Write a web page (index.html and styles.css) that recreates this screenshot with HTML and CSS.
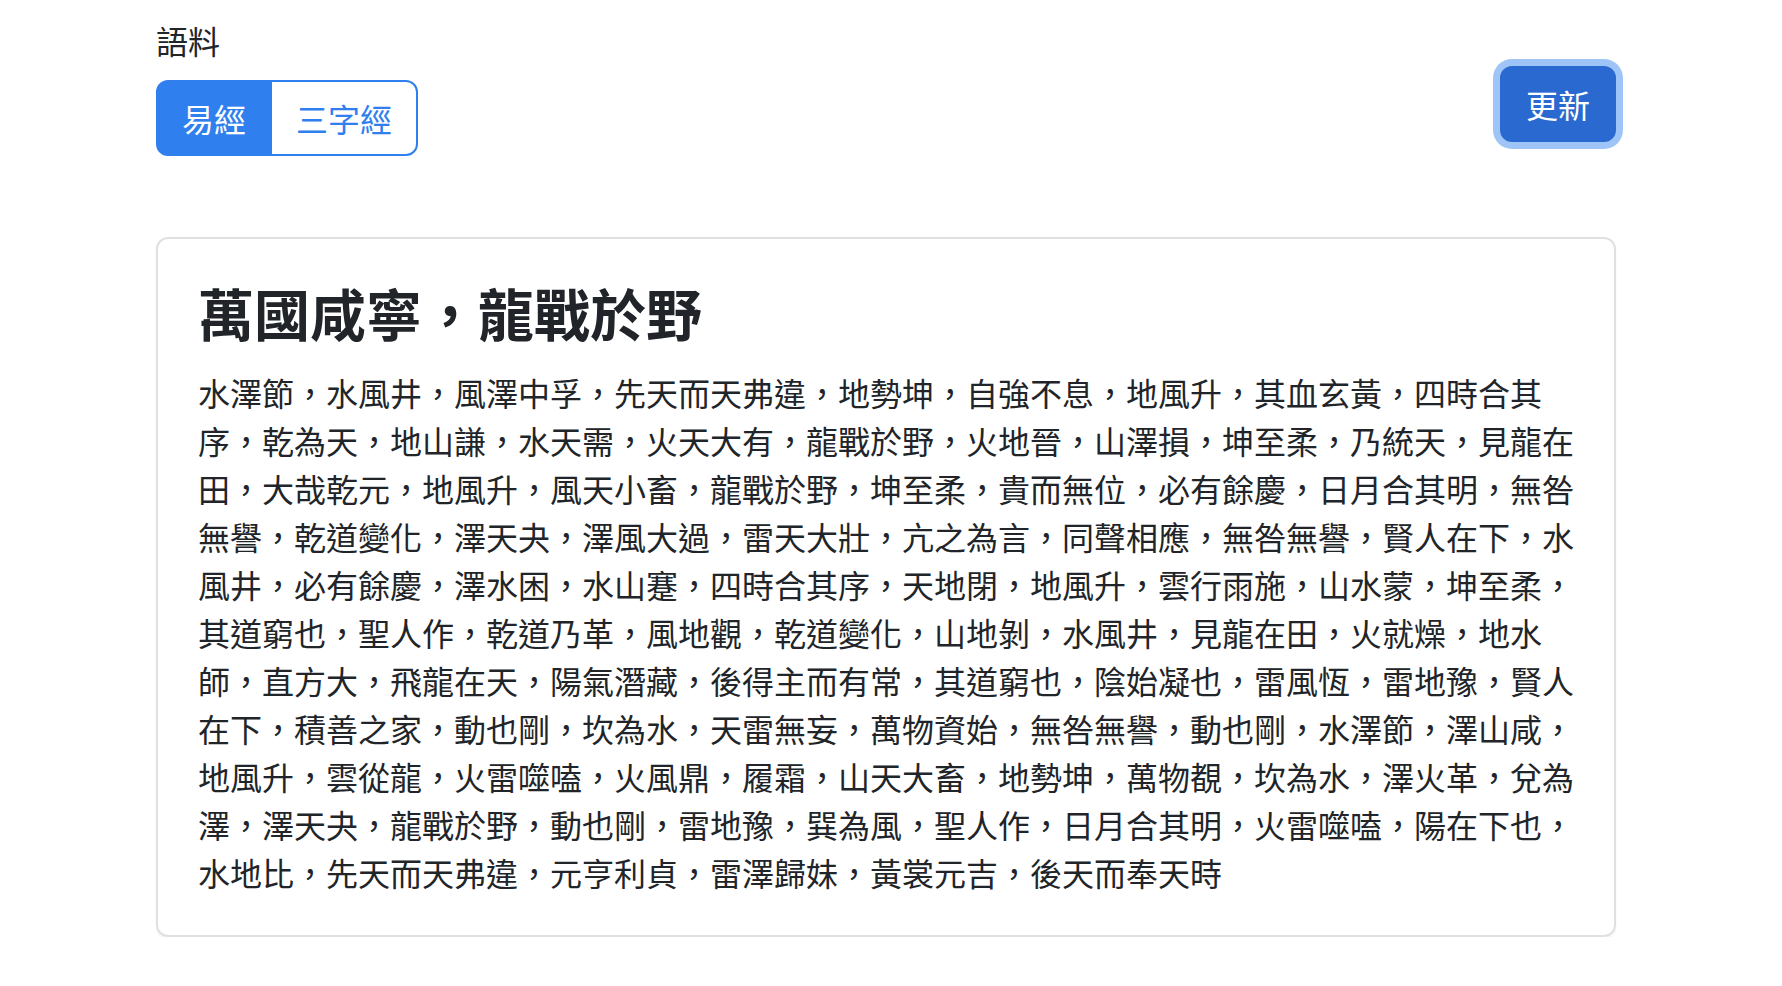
FILE: index.html
```html
<!DOCTYPE html>
<html lang="zh-Hant">
<head>
<meta charset="utf-8">
<title>語料</title>
<link rel="stylesheet" href="styles.css">
</head>
<body>
<div class="page">
  <div class="toolbar">
    <div class="field">
      <label class="field-label">語料</label>
      <div class="btn-group">
        <button class="toggle active">易經</button>
        <button class="toggle">三字經</button>
      </div>
    </div>
    <button class="btn-refresh">更新</button>
  </div>
  <div class="card">
    <h3 class="card-title">萬國咸寧，龍戰於野</h3>
    <p class="card-text">水澤節，水風井，風澤中孚，先天而天弗違，地勢坤，自強不息，地風升，其血玄黃，四時合其序，乾為天，地山謙，水天需，火天大有，龍戰於野，火地晉，山澤損，坤至柔，乃統天，見龍在田，大哉乾元，地風升，風天小畜，龍戰於野，坤至柔，貴而無位，必有餘慶，日月合其明，無咎無譽，乾道變化，澤天夬，澤風大過，雷天大壯，亢之為言，同聲相應，無咎無譽，賢人在下，水風井，必有餘慶，澤水困，水山蹇，四時合其序，天地閉，地風升，雲行雨施，山水蒙，坤至柔，其道窮也，聖人作，乾道乃革，風地觀，乾道變化，山地剝，水風井，見龍在田，火就燥，地水師，直方大，飛龍在天，陽氣潛藏，後得主而有常，其道窮也，陰始凝也，雷風恆，雷地豫，賢人在下，積善之家，動也剛，坎為水，天雷無妄，萬物資始，無咎無譽，動也剛，水澤節，澤山咸，地風升，雲從龍，火雷噬嗑，火風鼎，履霜，山天大畜，地勢坤，萬物覩，坎為水，澤火革，兌為澤，澤天夬，龍戰於野，動也剛，雷地豫，巽為風，聖人作，日月合其明，火雷噬嗑，陽在下也，水地比，先天而天弗違，元亨利貞，雷澤歸妹，黃裳元吉，後天而奉天時</p>
  </div>
</div>
</body>
</html>
```
FILE: styles.css
```css
html, body {
  margin: 0;
  padding: 0;
  background: #ffffff;
}
body {
  font-family: "Noto Sans CJK TC", "Noto Sans", sans-serif;
  color: #212529;
  font-size: 32px;
  line-height: 48px;
}
.page {
  margin-left: 156px;
  width: 1460px;
  padding-top: 16px;
}
.toolbar {
  display: flex;
  justify-content: space-between;
  align-items: flex-start;
}
.field-label {
  display: block;
  font-size: 32px;
  line-height: 48px;
  margin-bottom: 16px;
}
.btn-group {
  display: inline-flex;
}
.toggle {
  font-family: inherit;
  font-size: 32px;
  line-height: 48px;
  padding: 12px 24px;
  border: 2px solid #2f80ee;
  background: #ffffff;
  color: #2f80ee;
  margin: 0;
  cursor: pointer;
}
.toggle:first-child {
  border-radius: 12px 0 0 12px;
}
.toggle:last-child {
  border-radius: 0 12px 12px 0;
  margin-left: -2px;
}
.toggle.active {
  background: #2f80ee;
  color: #ffffff;
}
.btn-refresh {
  font-family: inherit;
  font-size: 32px;
  line-height: 48px;
  padding: 12px 24px;
  border: 2px solid #2a6ad0;
  border-radius: 12px;
  background: #2a6ad0;
  color: #ffffff;
  margin-top: 50px;
  box-shadow: 0 0 0 7px #9fc5f8;
  cursor: pointer;
}
.card {
  margin-top: 81px;
  border: 2px solid #e0e0e0;
  border-radius: 12px;
  padding: 39px 38px 39px 40px;
  box-shadow: 0 2px 2px rgba(0, 0, 0, 0.05);
}
.card-title {
  font-size: 56px;
  line-height: 67px;
  font-weight: 700;
  margin: 0 0 23px 0;
}
.card-text {
  margin: 0;
  font-size: 32px;
  line-height: 48px;
}
```
